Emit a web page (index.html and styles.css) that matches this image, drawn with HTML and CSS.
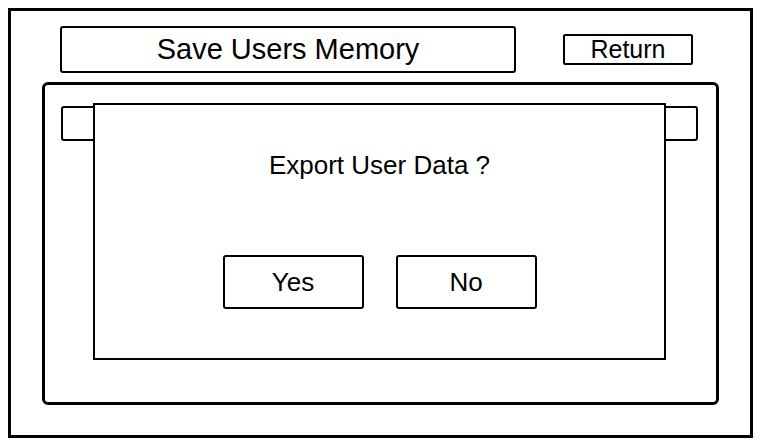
FILE: index.html
```html
<!DOCTYPE html>
<html>
<head>
<meta charset="utf-8">
<link rel="stylesheet" href="styles.css">
</head>
<body>
<div class="frame">
  <div class="header">
    <div class="title">Save Users Memory</div>
    <div class="return-btn">Return</div>
  </div>
  <div class="panel">
    <div class="tab tab-left"></div>
    <div class="dialog">
      <div class="question">Export User Data ?</div>
      <div class="actions">
        <div class="btn">Yes</div>
        <div class="btn">No</div>
      </div>
    </div>
    <div class="tab tab-right"></div>
  </div>
</div>
</body>
</html>
```
FILE: styles.css
```css
* { box-sizing: border-box; }
html, body { margin: 0; padding: 0; background: #fff; }
body {
  font-family: "Liberation Sans", Arial, sans-serif;
  color: #000;
  width: 768px;
  height: 448px;
  overflow: hidden;
}
.frame {
  margin: 8px 0 0 8px;
  width: 745px;
  height: 430px;
  border: 3px solid #000;
}
.header {
  display: flex;
  align-items: center;
  padding: 15px 0 0 49px;
  gap: 47px;
}
.title {
  width: 456px;
  height: 47px;
  border: 2px solid #000;
  border-radius: 3px;
  display: flex;
  align-items: center;
  justify-content: center;
  font-size: 29px;
}
.return-btn {
  width: 130px;
  height: 31px;
  border: 2px solid #000;
  border-radius: 2px;
  display: flex;
  align-items: center;
  justify-content: center;
  font-size: 25px;
}
.panel {
  margin: 9px 0 0 31px;
  width: 677px;
  height: 323px;
  border: 3px solid #000;
  border-radius: 6px;
  display: flex;
  align-items: flex-start;
  padding: 18px 0 0 16px;
}
.tab {
  width: 35px;
  height: 35px;
  margin-top: 3px;
  border: 2px solid #000;
  border-radius: 3px;
  flex: none;
}
.tab-right {
  width: 36px;
  margin-left: -4px;
}
.dialog {
  position: relative;
  z-index: 1;
  flex: none;
  margin-left: -3px;
  width: 573px;
  height: 257px;
  border: 2px solid #000;
  background: #fff;
  padding-top: 46px;
  display: flex;
  flex-direction: column;
  align-items: center;
}
.question {
  font-size: 26px;
  line-height: 29px;
}
.actions {
  margin-top: 75px;
  display: flex;
  gap: 32px;
}
.btn {
  width: 141px;
  height: 54px;
  border: 2px solid #000;
  border-radius: 3px;
  display: flex;
  align-items: center;
  justify-content: center;
  font-size: 26px;
}
```
